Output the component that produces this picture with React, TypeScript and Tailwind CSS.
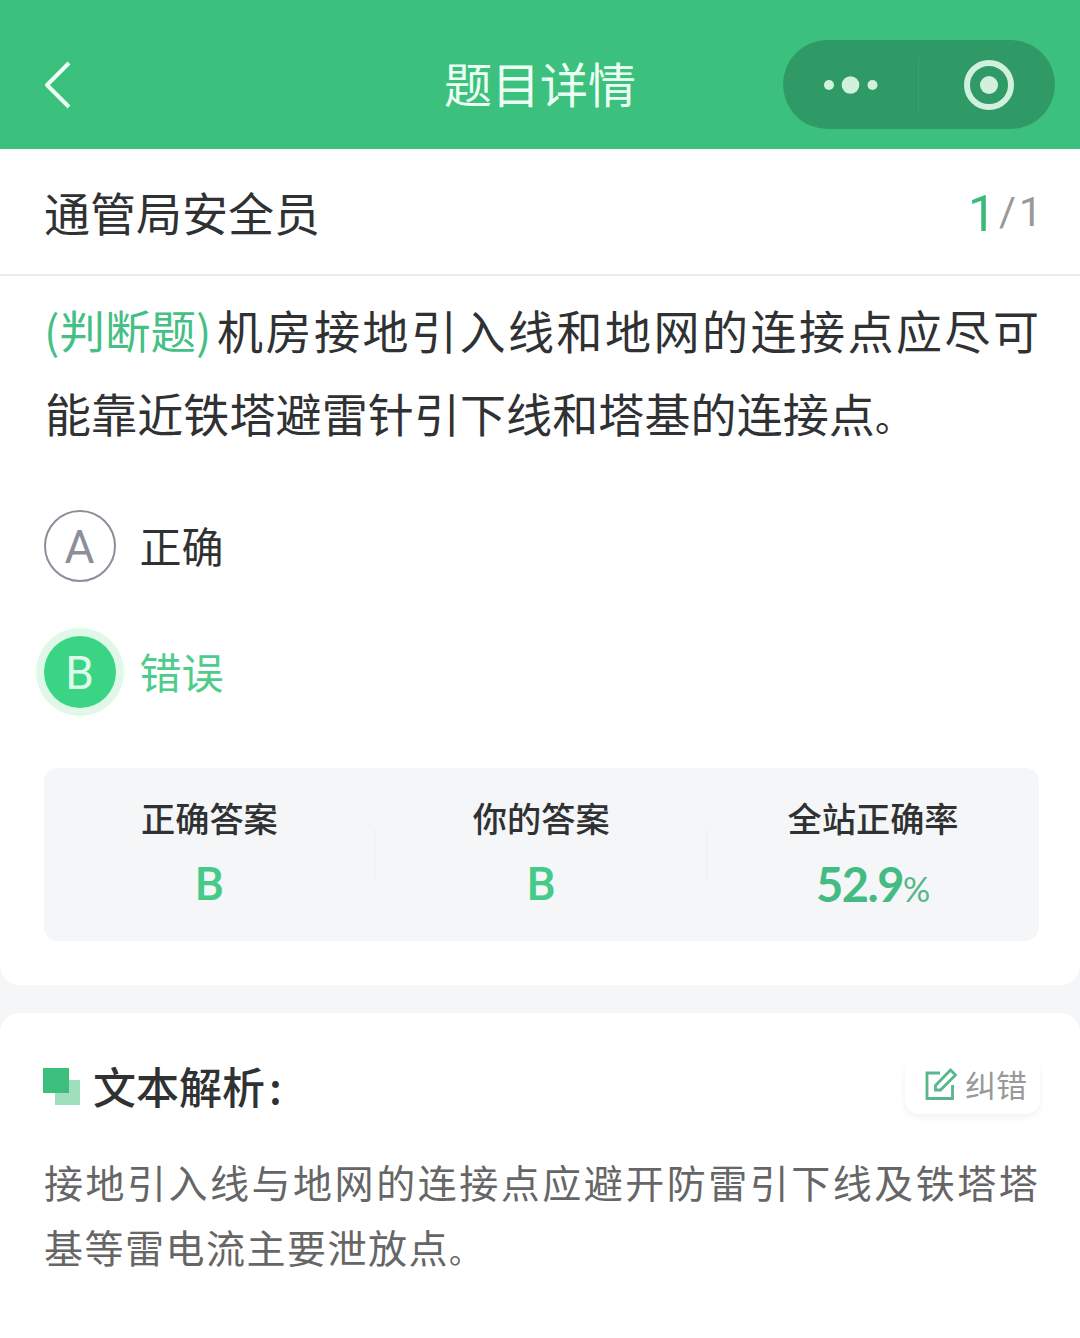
import React from "react";

function Line({ children, className }: { children: string; className: string }) {
  return (
    <span className={`flex items-baseline justify-between whitespace-nowrap ${className}`}>
      {Array.from(children).map((c, i) => (
        <span key={i} className={c === "。" ? "w-[1.25em] text-[0.8em]" : ""}>{c}</span>
      ))}
    </span>
  );
}

function Stat({ label, divided, children }: { label: string; divided?: boolean; children: React.ReactNode }) {
  return (
    <div className="relative flex flex-col items-center">
      <p className="h-[50px] text-[34.2px] leading-[50px] font-medium">{label}</p>
      <div className="mt-[14px] flex h-[56px] items-baseline leading-[56px]">{children}</div>
      {divided && <span className="absolute top-[37px] right-0 h-[50px] w-px bg-[#eceeef]" />}
    </div>
  );
}

export default function App() {
  return (
    <div className="h-[1338px] w-[1080px] overflow-hidden bg-[#f4f6f8] font-['Noto_Sans_CJK_SC',sans-serif] text-[#303133]">
      <header className="flex h-[149px] items-start bg-[#3bc07e] text-[#ecfff3]">
        <svg className="mt-[60px] ml-[41px] h-[50px] w-[32px]" viewBox="0 0 32 50" fill="none" stroke="currentColor" strokeWidth="4" strokeLinejoin="round">
          <path d="M28 3 6 25 28 47" />
        </svg>
        <h1 className="mt-[47px] ml-[371px] w-[191px] text-[48px] leading-[70px] whitespace-nowrap">题目详情</h1>
        <svg className="mt-10 ml-[148px] h-[89px] w-[272px] rounded-full bg-[#2f9a65] text-[#d2f0de]" viewBox="0 0 272 89" fill="currentColor">
          <circle cx="46" cy="45" r="5" />
          <circle cx="67.500" cy="45" r="8.800" />
          <circle cx="89.500" cy="45" r="5" />
          <path d="M135 17h1v55h-1z" fill="#37a46d" />
          <circle cx="206" cy="45" r="22" fill="none" stroke="currentColor" strokeWidth="6" />
          <circle cx="206" cy="45" r="9" />
        </svg>
      </header>
      <main>
        <section className="h-[836px] rounded-b-[20px] bg-white">
          <div className="flex h-[127px] items-center justify-between border-b-2 border-[#ebecee] pr-[38px] pl-11">
            <span className="text-[46px]">通管局安全员</span>
            <span className="flex items-center font-['Roboto',sans-serif] text-[41px] leading-none text-[#999]">
              <span className="pt-[5px] text-[50px] text-[#3cba7b]">1</span>
              <span className="mr-[3px] ml-[3px] pt-px">/</span>
              <span className="pt-px">1</span>
            </span>
          </div>
          <div className="h-[166px] pt-[12px] pr-[41px] pl-11 text-[46px] leading-[83px]">
            <div className="flex">
              <span className="w-[173px] shrink-0 text-[45.5px] whitespace-nowrap text-[#45bf83]">(判断题)</span>
              <Line className="w-[822px]">机房接地引入线和地网的连接点应尽可</Line>
            </div>
            <Line className="ml-px w-[876px]">能靠近铁塔避雷针引下线和塔基的连接点。</Line>
          </div>
          <div className="mt-[68px] ml-[43.5px] flex h-[72px] items-center gap-6 text-[42px]">
            <span className="flex size-[72px] items-center justify-center rounded-full border-[2.5px] border-[#8c8f99] pt-0.5 font-['Roboto',sans-serif] text-[46px] leading-none text-[#8c8f9b]">A</span>
            <span className="-mt-[4px]">正确</span>
          </div>
          <div className="mt-[54px] ml-[43.5px] flex h-[72px] items-center gap-6 text-[42px] text-[#4dcc8c]">
            <span className="flex size-[72px] items-center justify-center rounded-full bg-[#3bd485] pt-0.5 font-['Roboto',sans-serif] text-[46px] leading-none text-[#dcfbe9] ring-8 ring-[#dff8ea]">B</span>
            <span className="-mt-[4px]">错误</span>
          </div>
          <div className="mt-[60px] mr-[41px] ml-[43.5px] grid h-[173px] grid-cols-3 rounded-[14px] bg-[#f4f6f7] pt-[24px]">
            <Stat label="正确答案" divided><b className="font-['Roboto',sans-serif] text-[46px] font-medium text-[#46ca89]">B</b></Stat>
            <Stat label="你的答案" divided><b className="font-['Roboto',sans-serif] text-[46px] font-medium text-[#46ca89]">B</b></Stat>
            <Stat label="全站正确率">
              <b className="font-['Lato',sans-serif] text-[47px] font-bold tracking-[-1.5px] text-[#45bb84]">52.9</b>
              <span className="font-['Lato',sans-serif] text-[34px] text-[#55b789]">%</span>
            </Stat>
          </div>
        </section>
        <section className="mt-[28px] h-[325px] rounded-t-[20px] bg-white pt-[42px] pr-[41px] pl-11">
          <div className="flex h-[62px] items-center">
            <svg className="-ml-px h-[37px] w-[37px]" viewBox="0 0 37 37">
              <path d="M12 12h25v25H12z" fill="#a0dfbc" />
              <path d="M0 0h26v25H0z" fill="#3cbf7c" />
            </svg>
            <h2 className="-mt-[3px] ml-[13px] flex text-[43px] leading-[62px] font-medium">文本解析<span className="ml-[4px]">:</span></h2>
            <button className="-mr-px ml-auto flex h-[56px] w-[135px] items-center rounded-[14px] bg-white pb-1 pl-[20px] text-[31px] text-[#999] shadow-[0_3px_7px_rgba(0,0,0,0.06)]">
              <svg className="mr-[7px] h-[33px] w-[33px] shrink-0" viewBox="0 0 33 33" fill="none" stroke="#57b78a" strokeWidth="2.800">
                <path d="M15 5H2v25.500h25.500V17" />
                <path d="m10.500 17.500 15-15.500 5 5-15 15h-5z" />
              </svg>
              <span className="whitespace-nowrap">纠错</span>
            </button>
          </div>
          <div className="mt-[32px] text-[39px] leading-[65px] text-[#666]">
            <Line className="w-[994px]">接地引入线与地网的连接点应避开防雷引下线及铁塔塔</Line>
            <Line className="w-[444px]">基等雷电流主要泄放点。</Line>
          </div>
        </section>
      </main>
    </div>
  );
}
